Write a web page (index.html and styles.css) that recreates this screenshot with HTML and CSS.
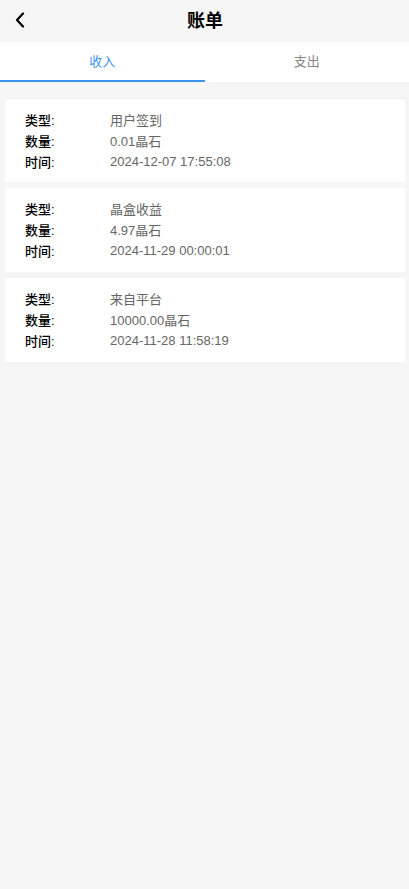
FILE: index.html
```html
<!DOCTYPE html>
<html lang="zh">
<head>
<meta charset="utf-8">
<link rel="stylesheet" href="styles.css">
</head>
<body>
<header class="nav">
  <span class="back"><svg width="12" height="16" viewBox="0 0 12 16"><path d="M9 1.5 L3 8 L9 14.5" fill="none" stroke="#000" stroke-width="2.2" stroke-linecap="round" stroke-linejoin="round"/></svg></span>
  <h1 class="title">账单</h1>
</header>
<nav class="tabs">
  <div class="tab active">收入</div>
  <div class="tab">支出</div>
</nav>
<main class="list">
  <section class="card">
    <div class="row"><span class="label">类型:</span><span class="value">用户签到</span></div>
    <div class="row"><span class="label">数量:</span><span class="value">0.01晶石</span></div>
    <div class="row"><span class="label">时间:</span><span class="value">2024-12-07 17:55:08</span></div>
  </section>
  <section class="card">
    <div class="row"><span class="label">类型:</span><span class="value">晶盒收益</span></div>
    <div class="row"><span class="label">数量:</span><span class="value">4.97晶石</span></div>
    <div class="row"><span class="label">时间:</span><span class="value">2024-11-29 00:00:01</span></div>
  </section>
  <section class="card">
    <div class="row"><span class="label">类型:</span><span class="value">来自平台</span></div>
    <div class="row"><span class="label">数量:</span><span class="value">10000.00晶石</span></div>
    <div class="row"><span class="label">时间:</span><span class="value">2024-11-28 11:58:19</span></div>
  </section>
</main>
</body>
</html>
```

FILE: styles.css
```css
html, body {
  margin: 0;
  padding: 0;
  background: #f6f6f6;
  font-family: "Liberation Sans", Arial, "Noto Sans CJK SC", sans-serif;
}
.nav {
  position: relative;
  height: 42px;
  display: flex;
  align-items: center;
  justify-content: center;
}
.back {
  position: absolute;
  left: 14px;
  top: 12px;
  width: 12px;
  height: 16px;
  display: flex;
}
.title {
  margin: 0;
  font-size: 18px;
  font-weight: bold;
  color: #000;
  line-height: 40px;
  padding-left: 1px;
}
.tabs {
  display: flex;
  background: #fff;
  height: 40px;
}
.tab {
  flex: 1;
  display: flex;
  align-items: center;
  justify-content: center;
  font-size: 13px;
  color: #888;
  box-sizing: border-box;
  padding-bottom: 3px;
}
.tab.active {
  color: #3b95ef;
  border-bottom: 2px solid #3b95ef;
  padding-bottom: 1px;
}
.list {
  display: flex;
  flex-direction: column;
  gap: 6px;
  padding: 16px 4px 0 5px;
}
.card {
  background: #fff;
  padding: 10px 0 10px 20px;
  height: 84px;
  box-sizing: border-box;
  border-top: 1px solid #eeeeee;
}
.card + .card {
  border-top: none;
}
.row {
  display: flex;
  height: 21px;
  align-items: center;
  font-size: 13px;
}
.label {
  width: 85px;
  color: #000;
  font-weight: 500;
}
.value {
  color: #666;
}
```
